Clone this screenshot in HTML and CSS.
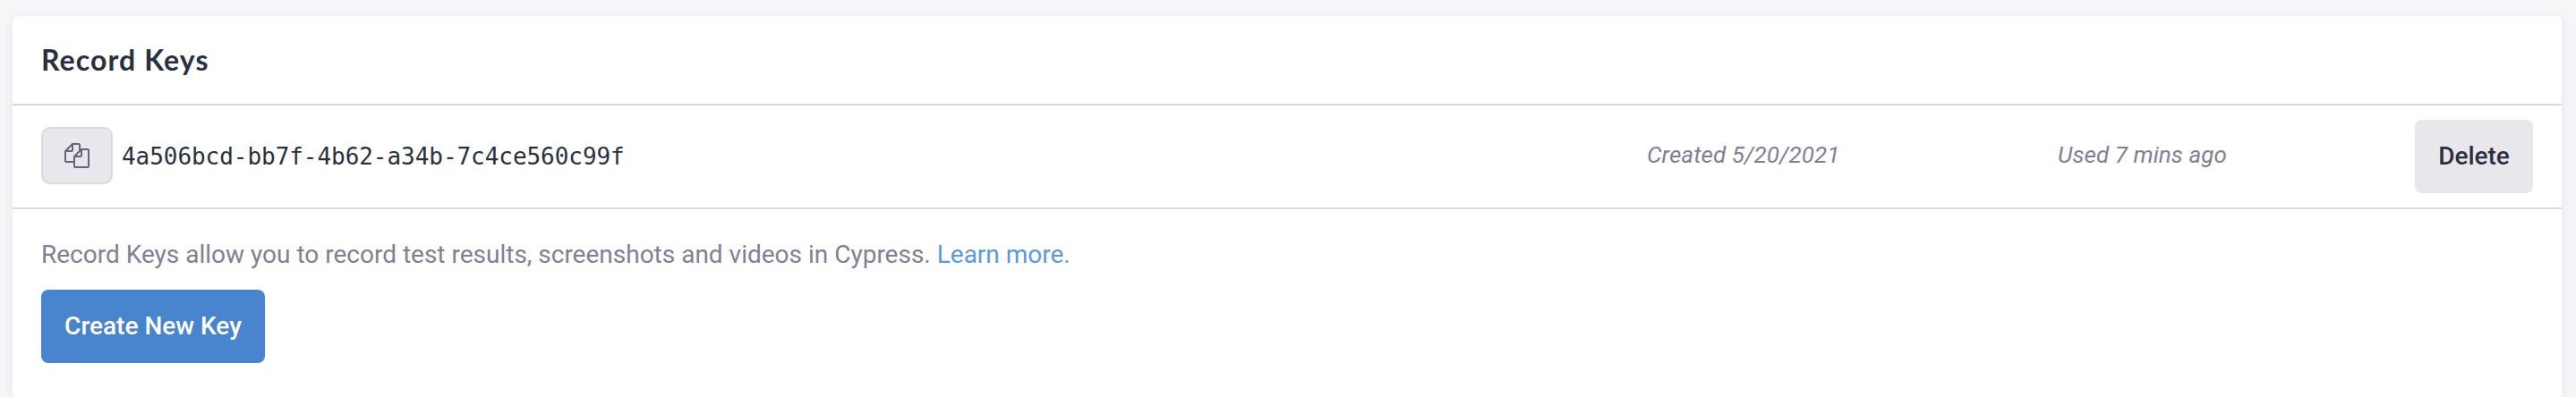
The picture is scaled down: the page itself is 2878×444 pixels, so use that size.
FILE: index.html
```html
<!DOCTYPE html>
<html lang="en">
<head>
<meta charset="utf-8">
<title>Record Keys</title>
<link rel="stylesheet" href="styles.css">
</head>
<body>
<section class="card">
  <header class="card-header"><h2 class="title">Record Keys</h2></header>
  <div class="key-row">
    <button class="copy" aria-label="Copy key">
      <svg class="copy-icon" viewBox="0 0 28 28" fill="none" stroke="currentColor" stroke-width="2" stroke-linejoin="round">
        <path d="M11 21H2q-1 0-1-1V9L9 1h7q1 0 1 1v6M9 1v7q0 1-1 1H1"/>
        <path d="M19 7h7q1 0 1 1v18q0 1-1 1H12q-1 0-1-1V15ZM19 7v7q0 1-1 1h-7"/>
      </svg>
    </button>
    <code class="key">4a506bcd-bb7f-4b62-a34b-7c4ce560c99f</code>
    <span class="meta created">Created 5/20/2021</span>
    <span class="meta used">Used 7 mins ago</span>
    <button class="btn btn-delete">Delete</button>
  </div>
  <div class="card-body">
    <p class="help">Record Keys allow you to record test results, screenshots and videos in Cypress. <a class="link">Learn more.</a></p>
    <button class="btn btn-create">Create New Key</button>
  </div>
</section>
</body>
</html>
```
FILE: styles.css
```css
* { box-sizing: border-box; }
html { height: 100%; }
body {
  margin: 0;
  height: 100%;
  padding: 18px 16px 0 14px;
  background: #f6f6f9;
  color: #2a303e;
  font-family: Roboto, sans-serif;
  font-size: 28px;
}
button { border: 0; padding: 0; margin: 0; font-family: inherit; color: inherit; }
.card {
  height: 100%;
  background: #fff;
  border-radius: 6px 6px 0 0;
  box-shadow: 0 2px 12px rgba(40, 40, 60, 0.08);
}
.card-header {
  height: 100px;
  padding: 0 32px;
  border-bottom: 2px solid #d9d9e0;
}
.title {
  margin: 0;
  font: 700 32px/97px Lato, sans-serif;
  letter-spacing: 1.1px;
}
.key-row {
  display: grid;
  grid-template-columns: 80px 1714px 459px 1fr 132px;
  align-items: center;
  height: 116px;
  padding: 0 32px;
  border-bottom: 2px solid #d9d9e0;
}
.copy {
  display: flex;
  align-items: center;
  justify-content: center;
  width: 80px;
  height: 64px;
  margin-bottom: 2px;
  border: 2px solid #d9d9e0;
  border-radius: 10px;
  background: #e8e7ec;
  color: #636679;
}
.copy-icon { width: 28px; height: 28px; }
.key {
  padding-left: 10px;
  font: 26px/40px "DejaVu Sans Mono", monospace;
  letter-spacing: -0.05px;
  white-space: nowrap;
}
.meta {
  padding-bottom: 4px;
  color: #7f8192;
  font-size: 26px;
  line-height: 40px;
  letter-spacing: 0.08px;
  font-style: italic;
  white-space: nowrap;
}
.btn {
  height: 82px;
  border-radius: 8px;
  font-size: 28px;
  line-height: 82px;
  font-weight: 500;
}
.btn-delete { width: 132px; background: #e8e7ec; }
.card-body { padding: 31px 32px 0; }
.help { margin: 0 0 19px; line-height: 40px; color: #7f8192; }
.link { color: #5a98e0; }
.btn-create { display: block; width: 250px; background: #4984ce; color: #fff; }
```
